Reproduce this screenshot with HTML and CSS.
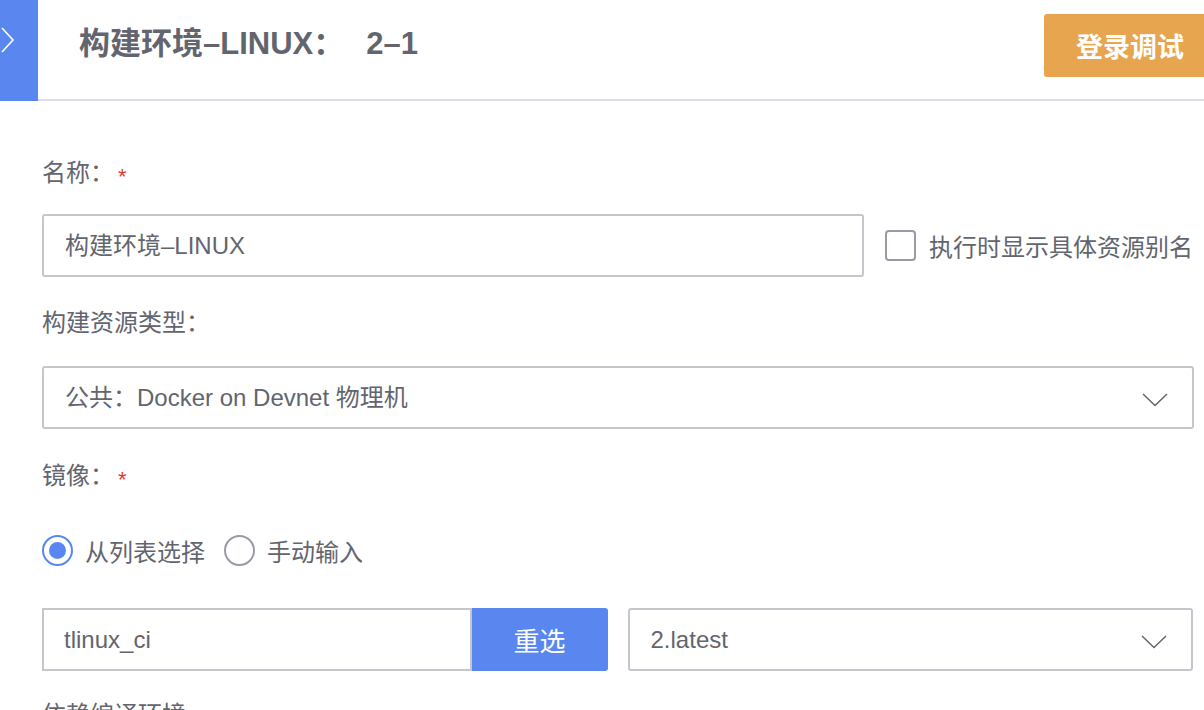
FILE: index.html
```html
<!DOCTYPE html>
<html lang="zh">
<head>
<meta charset="utf-8">
<title>构建环境-LINUX</title>
<link rel="stylesheet" href="styles.css">
</head>
<body>
<div class="page">
  <header class="head">
    <div class="toggle">
      <svg width="16" height="28" viewBox="0 0 16 28"><path d="M2 2 L13 14 L2 26" fill="none" stroke="#fff" stroke-width="1.6"/></svg>
    </div>
    <div class="head-main">
      <h1 class="title">构建环境–LINUX：<span class="num">2–1</span></h1>
      <button class="login">登录调试</button>
    </div>
  </header>
  <main class="form">
    <div class="label l-name">名称：<span class="req">*</span></div>
    <div class="row r-name">
      <div class="field f-name">构建环境–LINUX</div>
      <label class="check"><span class="box"></span>执行时显示具体资源别名</label>
    </div>
    <div class="label l-type">构建资源类型：</div>
    <div class="field select f-type">公共：Docker on Devnet 物理机
      <svg class="arrow" width="26" height="14" viewBox="0 0 26 14"><path d="M1 1 L13 12.5 L25 1" fill="none" stroke="#63656e" stroke-width="1.5"/></svg>
    </div>
    <div class="label l-image">镜像：<span class="req">*</span></div>
    <div class="radios">
      <label class="radio on"><span class="circle"></span>从列表选择</label>
      <label class="radio"><span class="circle"></span>手动输入</label>
    </div>
    <div class="row r-image">
      <div class="field f-image">tlinux_ci</div>
      <button class="reselect">重选</button>
      <div class="field select f-ver">2.latest
        <svg class="arrow" width="26" height="14" viewBox="0 0 26 14"><path d="M1 1 L13 12.5 L25 1" fill="none" stroke="#63656e" stroke-width="1.5"/></svg>
      </div>
    </div>
    <div class="label l-dep">依赖编译环境</div>
  </main>
</div>
</body>
</html>
```
FILE: styles.css
```css
html, body {
  margin: 0;
  padding: 0;
  background: #fff;
  overflow: hidden;
}
body {
  font-family: "Liberation Sans", "Noto Sans CJK SC", sans-serif;
  color: #63656e;
}
.page {
  width: 1220px;
  height: 710px;
}
.head {
  display: flex;
  height: 101px;
}
.toggle {
  width: 38px;
  height: 101px;
  background: #5a87ef;
  flex-shrink: 0;
  display: flex;
  align-items: flex-start;
  padding-top: 26px;
  box-sizing: border-box;
}
.toggle svg {
  display: block;
}
.head-main {
  flex: 1;
  display: flex;
  justify-content: space-between;
  align-items: flex-start;
  border-bottom: 2px solid #dcdee5;
  box-sizing: border-box;
  height: 101px;
  padding-left: 41px;
}
.title {
  margin: 24px 0 0;
  font-size: 31px;
  font-weight: bold;
  line-height: 40px;
  color: #63656e;
}
.title .num {
  margin-left: 22px;
}
.login {
  margin-top: 14px;
  width: 176px;
  height: 63px;
  border: none;
  border-radius: 3px;
  background: #e8a550;
  color: #fff;
  font-family: "Noto Sans CJK SC", sans-serif;
  font-size: 27px;
  font-weight: bold;
  text-align: left;
  padding-left: 32px;
}
.form {
  padding: 0 27px 0 42px;
}
.label {
  font-size: 24px;
  line-height: 30px;
  height: 30px;
}
.req {
  color: #ea3636;
  margin-left: 4px;
  font-size: 22px;
  vertical-align: -3px;
}
.l-name { margin-top: 57px; }
.l-type { margin-top: 31px; }
.l-image { margin-top: 32px; }
.l-dep { margin-top: 29px; }
.row {
  display: flex;
  align-items: center;
}
.r-name { margin-top: 26px; }
.field {
  box-sizing: border-box;
  height: 63px;
  border: 2px solid #c4c6cc;
  border-radius: 3px;
  font-size: 24px;
  line-height: 59px;
  padding-left: 21px;
  color: #63656e;
}
.f-name {
  width: 824px;
}
.check {
  display: flex;
  align-items: center;
  margin-left: 21px;
  font-size: 24px;
  white-space: nowrap;
}
.box {
  box-sizing: border-box;
  width: 31px;
  height: 31px;
  border: 2px solid #979ba5;
  border-radius: 4px;
  margin-right: 13px;
}
.select {
  position: relative;
}
.arrow {
  position: absolute;
  right: 24px;
  top: 25px;
}
.f-type {
  margin-top: 28px;
  width: 1152px;
}
.radios {
  display: flex;
  margin-top: 43px;
  height: 32px;
  align-items: center;
}
.radio {
  display: flex;
  align-items: center;
  font-size: 24px;
  margin-right: 19px;
}
.circle {
  box-sizing: border-box;
  width: 31px;
  height: 31px;
  border: 2px solid #979ba5;
  border-radius: 50%;
  margin-right: 12px;
  display: flex;
  align-items: center;
  justify-content: center;
}
.radio.on .circle {
  border-color: #5a87ef;
}
.radio.on .circle::after {
  content: "";
  width: 17px;
  height: 17px;
  border-radius: 50%;
  background: #5a87ef;
}
.r-image {
  margin-top: 42px;
}
.f-image {
  width: 430px;
  border-radius: 0;
  padding-left: 20px;
}
.reselect {
  width: 136px;
  height: 63px;
  border: none;
  border-radius: 0 3px 3px 0;
  background: #5a87ef;
  color: #fff;
  font-family: "Noto Sans CJK SC", sans-serif;
  font-size: 26px;
}
.f-ver {
  margin-left: 20px;
  width: 566px;
}
```
